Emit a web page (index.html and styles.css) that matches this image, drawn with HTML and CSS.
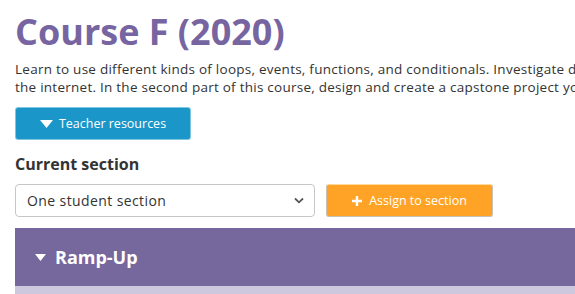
FILE: index.html
```html
<!DOCTYPE html>
<html lang="en">
<head>
    <meta charset="UTF-8">
    <meta name="viewport" content="width=device-width, initial-scale=1.0">
    <title>Course F (2020)</title>
    <link rel="stylesheet" href="styles.css">
</head>
<body>
    <div class="page">
        <h1 class="course-title">Course F (2020)</h1>
        <p class="course-desc">Learn to use different kinds of loops, events, functions, and conditionals. Investigate different problem-solving techniques and discuss societal impacts of computing and the internet. In the second part of this course, design and create a capstone project you can share with friends and family.</p>

        <button class="btn btn-blue">
            <svg class="caret" width="13" height="8" viewBox="0 0 13 8"><path d="M0 0H13L6.5 8Z" fill="#fff"/></svg>
            Teacher resources
        </button>

        <h3 class="section-label">Current section</h3>
        <div class="assign-row">
            <div class="select-box">
                <span>One student section</span>
                <svg class="chevron" width="10" height="7" viewBox="0 0 10 7"><path d="M1 1.5L5 5.3L9 1.5" fill="none" stroke="#555" stroke-width="1.8"/></svg>
            </div>
            <button class="btn btn-orange">
                <svg class="plus" width="10" height="10" viewBox="0 0 10 10"><path d="M5 0V10M0 5H10" stroke="#fff" stroke-width="2.4"/></svg>
                Assign to section
            </button>
        </div>

        <div class="unit">
            <div class="unit-header">
                <svg class="unit-caret" width="11" height="7" viewBox="0 0 11 7"><path d="M0 0H11L5.5 7Z" fill="#fff"/></svg>
                Ramp-Up
            </div>
            <div class="unit-body"></div>
        </div>
    </div>
</body>
</html>
```

FILE: styles.css
```css
body {
    margin: 0;
    font-family: 'Open Sans', sans-serif;
    color: #4d4d4d;
    background: white;
    overflow: hidden;
}

.page {
    width: 1200px;
    padding-left: 15px;
}

.course-title {
    margin: 10px 0 0;
    font-size: 36px;
    line-height: 44px;
    font-weight: 700;
    color: #7665a0;
}

.course-desc {
    width: 1114px;
    margin: 6px 0 0;
    font-size: 13.5px;
    letter-spacing: 0.25px;
    line-height: 18px;
    color: #333;
}

.btn {
    display: flex;
    align-items: center;
    justify-content: center;
    gap: 6px;
    font-family: 'Open Sans', sans-serif;
    color: white;
    border-radius: 3px;
    cursor: pointer;
}

.btn-blue {
    margin-top: 11px;
    width: 176px;
    height: 33px;
    font-size: 12.5px;
    background-color: #1a96c9;
    border: 1px solid #7fc6e3;
}

.section-label {
    margin: 13px 0 0;
    font-size: 16px;
    line-height: 22px;
    font-weight: 700;
    color: #333;
}

.assign-row {
    display: flex;
    gap: 11px;
    margin-top: 9px;
}

.select-box {
    display: flex;
    align-items: center;
    justify-content: space-between;
    box-sizing: border-box;
    width: 300px;
    height: 33px;
    padding: 0 10px 0 11px;
    border: 1px solid #c6c6c6;
    border-radius: 4px;
    font-size: 14px;
    letter-spacing: 0.4px;
    color: #333;
}

.btn-orange {
    width: 167px;
    height: 33px;
    gap: 7px;
    font-size: 12.5px;
    background-color: #ffa326;
    border: 1px solid #c9c0b3;
    border-top-color: #ffd89a;
}

.unit {
    margin-top: 11px;
}

.unit-header {
    display: flex;
    align-items: center;
    gap: 9px;
    height: 58px;
    padding-left: 20px;
    background-color: #76679d;
    color: white;
    font-size: 18px;
    font-weight: 700;
}

.unit-body {
    height: 20px;
    background-color: #cdc8de;
}
```
